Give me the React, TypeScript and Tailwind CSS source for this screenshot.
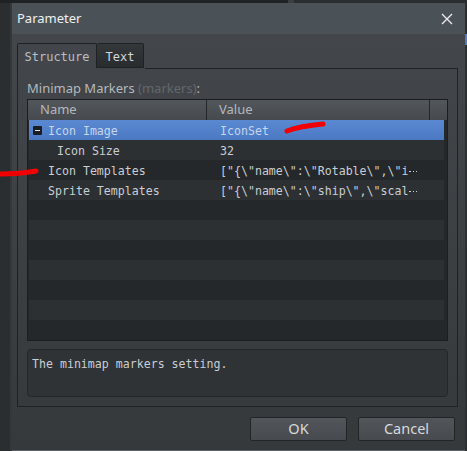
const mono = "font-['DejaVu_Sans_Mono','Liberation_Mono',monospace]";
const sans = "font-['Noto_Sans','Open_Sans',sans-serif]";

type Row = { name: string; value: string; depth: number; toggle?: boolean; selected?: boolean; cut?: boolean };

const rows: Row[] = [
  { name: "Icon Image", value: "IconSet", depth: 0, toggle: true, selected: true },
  { name: "Icon Size", value: "32", depth: 1 },
  { name: "Icon Templates", value: '["{\\"name\\":\\"Rotable\\",\\"i', depth: 0, cut: true },
  { name: "Sprite Templates", value: '["{\\"name\\":\\"ship\\",\\"scal', depth: 0, cut: true },
];

const EMPTY_ROWS = 7;

// elided-text marker: three midline dots
function Elide() {
  return (
    <span className="ml-[1px] inline-flex h-[8px] w-[8px] items-center gap-[2px] align-middle">
      <span className="h-[1px] w-[1.5px] bg-current" />
      <span className="h-[1px] w-[1.5px] bg-current" />
      <span className="h-[1px] w-[1.5px] bg-current" />
    </span>
  );
}

function PropertyRow({ row, index }: { row: Row; index: number }) {
  const bg = row.selected
    ? "bg-gradient-to-b from-[#5a89d2] to-[#4b78c2]"
    : index % 2 === 0
      ? "bg-[#25282b]"
      : "bg-[#2c3033]";
  return (
    <div className={`flex h-[20px] items-center pt-[4px] ${bg} ${row.selected ? "text-[#c6d6ee]" : "text-[#c9ced3]"}`}>
      <div className="flex w-[179px] items-center">
        <div className="flex w-[19px] justify-end pr-[6px]">
          {row.toggle && (
            <div className="-mt-[3px] flex h-[9px] w-[9px] items-center justify-center rounded-[1px] bg-[#1b1e21]">
              <div className="h-[1px] w-[5px] bg-[#e6e6e6]" />
            </div>
          )}
        </div>
        <span className={row.depth ? "pl-[9px]" : ""}>{row.name}</span>
      </div>
      <div className="pl-[12px]">
        {row.value}
        {row.cut && <Elide />}
      </div>
    </div>
  );
}

export default function App() {
  return (
    <div className="relative flex h-[451px] w-[467px] flex-col overflow-hidden bg-[#26292c]">
      {/* strip of the main window peeking above the dialog */}
      <div className="flex h-[3px] bg-[#1f2225]">
        <div className="w-[288px]" />
        <div className="w-[6px] bg-[#3a3e41]" />
        <div className="flex-1 bg-[#2a2d30]" />
      </div>

      <div className="flex flex-1">
        <div className="w-[12px] border-r-[2px] border-[#34383b] bg-[#2b2e31]" />

        {/* dialog window */}
        <div className="flex w-[453px] flex-col border-b border-[#5a6065] bg-gradient-to-b from-[#44484c] to-[#35393c]">
          <div className={`flex h-[31px] items-center justify-between bg-[#4b5257] pl-[5px] pr-[12px] text-[13px] text-[#eef0f2] ${sans}`}>
            <span>Parameter</span>
            <svg width="12" height="12" viewBox="0 0 12 12" className="stroke-[#e8eaec]" strokeWidth="1.4">
              <path d="M1 1 L11 11 M11 1 L1 11" />
            </svg>
          </div>

          <div className="flex flex-1 flex-col pl-[5px] pr-[7px] pt-[9px]">
            {/* tabs */}
            <div className={`flex h-[25px] text-[12px] ${mono}`}>
              <div className="flex w-[80px] items-center justify-center rounded-t-[2px] border border-b-0 border-[#1f2225] bg-[#42464a] pt-[2px] text-[#b9bec3]">
                Structure
              </div>
              <div className="flex w-[47px] items-center justify-center rounded-t-[2px] border border-l-0 border-[#1f2225] bg-gradient-to-b from-[#34383b] to-[#292c2f] pt-[2px] text-[#d2d6da]">
                Text
              </div>
            </div>

            {/* tab pane */}
            <div className="flex flex-col border border-t-0 border-[#1f2225] px-[9px] pb-[9px]">
              <div className="-mx-[9px] ml-[118px] border-t border-[#1f2225]" />
              <div className={`flex h-[30px] items-end pb-[1px] text-[13px] text-[#b4b9be] ${sans}`}>
                Minimap Markers&nbsp;<span className="text-[#62676c]">(markers)</span>:
              </div>

              {/* property table */}
              <div className="border border-[#1b1d1f] bg-[#25282b]">
                <div className={`flex h-[20px] bg-gradient-to-b from-[#52575b] to-[#464a4e] text-[13px] text-[#b3b8bd] ${sans}`}>
                  <div className="flex w-[179px] items-center border-r border-[#24272a] pl-[12px]">Name</div>
                  <div className="flex w-[223px] items-center border-r border-[#24272a] pl-[12px]">Value</div>
                  <div className="flex-1" />
                </div>
                <div className={`border-r-[3px] border-[#25282b] pl-[1px] text-[11.6px] ${mono}`}>
                  {rows.map((r, i) => (
                    <PropertyRow key={r.name} row={r} index={i} />
                  ))}
                  {Array.from({ length: EMPTY_ROWS }, (_, i) => (
                    <div
                      key={i}
                      className={`h-[20px] ${(rows.length + i) % 2 === 0 ? "bg-[#25282b]" : "bg-[#2c3033]"}`}
                    />
                  ))}
                </div>
              </div>

              {/* description */}
              <div className={`mt-[8px] h-[48px] rounded-[4px] border border-[#24272a] bg-[#2f3336] px-[4px] pt-[6px] text-[11.6px] text-[#c9ced3] ${mono}`}>
                The minimap markers setting.
              </div>
            </div>

            {/* buttons */}
            <div className={`flex justify-end gap-[11px] pr-[3px] pt-[10px] text-[14.5px] text-[#d6d9dc] ${sans}`}>
              <button className="h-[24px] w-[97px] rounded-[2px] border border-[#222528] bg-gradient-to-b from-[#51565a] to-[#474b4f]">
                OK
              </button>
              <button className="h-[24px] w-[97px] rounded-[2px] border border-[#222528] bg-gradient-to-b from-[#51565a] to-[#474b4f]">
                Cancel
              </button>
            </div>
          </div>
        </div>

        <div className="flex w-[2px] flex-col bg-[#2d3033]">
          <div className="h-[31px]" />
          <div className="h-[11px] bg-[#4a7ccc]" />
        </div>
      </div>

      {/* red pen marks drawn on top */}
      <svg className="pointer-events-none absolute left-0 top-0" width="467" height="451">
        <path d="M287 131 Q300 126 323 124" stroke="#f00000" strokeWidth="5" strokeLinecap="round" fill="none" />
        <path d="M0 174 Q20 174 36 171" stroke="#f00000" strokeWidth="5" strokeLinecap="round" fill="none" />
      </svg>
    </div>
  );
}
